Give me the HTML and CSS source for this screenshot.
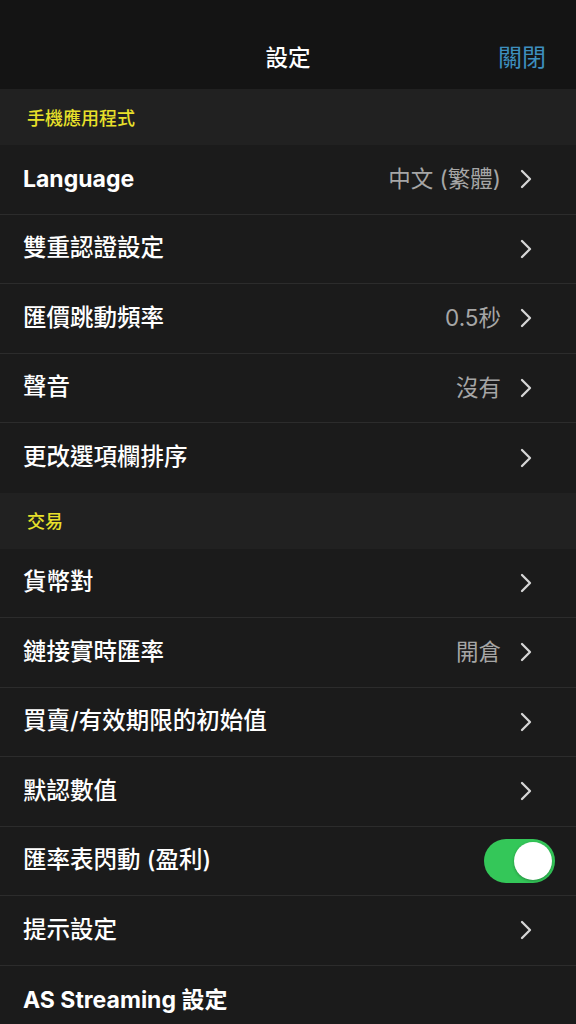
FILE: index.html
```html
<!DOCTYPE html>
<html lang="zh-Hant">
<head>
<meta charset="utf-8">
<title>設定</title>
<link rel="stylesheet" href="styles.css">
</head>
<body>
<div class="screen">
  <header class="navbar">
    <div class="nav-title">設定</div>
    <div class="nav-close">關閉</div>
  </header>

  <div class="section-head">手機應用程式</div>
  <div class="row"><span class="label latin">Language</span><span class="value">中文 (繁體)</span><svg class="chev" viewBox="0 0 12 20"><path d="M2 2 L10 10 L2 18"/></svg></div>
  <div class="row"><span class="label">雙重認證設定</span><svg class="chev" viewBox="0 0 12 20"><path d="M2 2 L10 10 L2 18"/></svg></div>
  <div class="row"><span class="label">匯價跳動頻率</span><span class="value">0.5秒</span><svg class="chev" viewBox="0 0 12 20"><path d="M2 2 L10 10 L2 18"/></svg></div>
  <div class="row"><span class="label">聲音</span><span class="value">沒有</span><svg class="chev" viewBox="0 0 12 20"><path d="M2 2 L10 10 L2 18"/></svg></div>
  <div class="row last"><span class="label">更改選項欄排序</span><svg class="chev" viewBox="0 0 12 20"><path d="M2 2 L10 10 L2 18"/></svg></div>

  <div class="section-head">交易</div>
  <div class="row"><span class="label">貨幣對</span><svg class="chev" viewBox="0 0 12 20"><path d="M2 2 L10 10 L2 18"/></svg></div>
  <div class="row"><span class="label">鏈接實時匯率</span><span class="value">開倉</span><svg class="chev" viewBox="0 0 12 20"><path d="M2 2 L10 10 L2 18"/></svg></div>
  <div class="row"><span class="label">買賣/有效期限的初始值</span><svg class="chev" viewBox="0 0 12 20"><path d="M2 2 L10 10 L2 18"/></svg></div>
  <div class="row"><span class="label">默認數值</span><svg class="chev" viewBox="0 0 12 20"><path d="M2 2 L10 10 L2 18"/></svg></div>
  <div class="row toggle-row"><span class="label">匯率表閃動 (盈利)</span><span class="toggle"><span class="knob"></span></span></div>
  <div class="row"><span class="label">提示設定</span><svg class="chev" viewBox="0 0 12 20"><path d="M2 2 L10 10 L2 18"/></svg></div>
  <div class="row"><span class="label latin">AS Streaming 設定</span></div>
</div>
</body>
</html>
```

FILE: styles.css
```css
html, body {
  margin: 0;
  padding: 0;
  background: #1b1b1b;
}
body {
  font-family: "Inter", "Noto Sans CJK TC", "Noto Sans", sans-serif;
  color: #ffffff;
  width: 576px;
  height: 1024px;
  overflow: hidden;
}
.screen {
  display: flex;
  flex-direction: column;
}
.navbar {
  height: 89px;
  background: #141414;
  display: flex;
  align-items: flex-end;
  justify-content: center;
  position: relative;
  padding-bottom: 16px;
  box-sizing: border-box;
}
.nav-title {
  font-size: 22.5px;
  font-weight: 500;
  line-height: 30px;
  color: #ffffff;
}
.nav-close {
  position: absolute;
  right: 30px;
  bottom: 16px;
  font-size: 24px;
  line-height: 30px;
  color: #3d8fbf;
}
.section-head {
  height: 56px;
  background: #212121;
  display: flex;
  align-items: center;
  padding-left: 27px;
  padding-bottom: 1px;
  font-size: 18px;
  font-weight: 500;
  color: #e8e02a;
  box-sizing: border-box;
}
.row {
  height: 69.5px;
  box-sizing: border-box;
  border-bottom: 1.5px solid #2c2c2c;
  background: #1b1b1b;
  display: flex;
  align-items: center;
  padding: 0 44px 0 23px;
}
.row.last {
  border-bottom: none;
}
.row.toggle-row {
  padding-right: 21px;
}
.label {
  flex: 1;
  font-size: 23.5px;
  font-weight: 500;
  line-height: 30px;
  margin-top: -1px;
  color: #ffffff;
  white-space: nowrap;
}
.label.latin {
  font-size: 23px;
  font-weight: 700;
  margin-top: 0;
}
.value {
  font-size: 22.5px;
  line-height: 30px;
  color: #a6a6a6;
  margin-right: 19px;
}
.chev {
  width: 12px;
  height: 20px;
}
.chev path {
  fill: none;
  stroke: #d6d6d6;
  stroke-width: 2.3;
  stroke-linecap: round;
  stroke-linejoin: round;
}
.toggle {
  width: 71px;
  height: 44px;
  border-radius: 22px;
  background: #34c759;
  position: relative;
}
.knob {
  position: absolute;
  right: 3px;
  top: 3px;
  width: 38px;
  height: 38px;
  border-radius: 50%;
  background: #ffffff;
  box-shadow: 0 1px 3px rgba(0,0,0,0.3);
}
```
